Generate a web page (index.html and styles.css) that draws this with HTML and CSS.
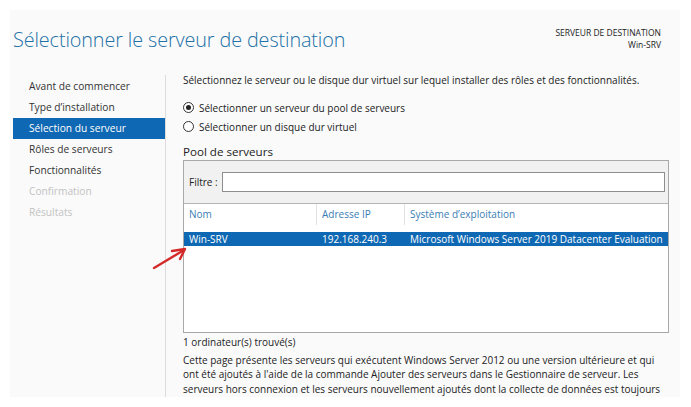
FILE: index.html
```html
<!DOCTYPE html>
<html lang="fr">
<head>
<meta charset="utf-8">
<link rel="stylesheet" href="styles.css">
</head>
<body>
<div class="window">
  <div class="header">
    <h1 class="title">Sélectionner le serveur de destination</h1>
    <div class="dest">
      <div>SERVEUR DE DESTINATION</div>
      <div>Win-SRV</div>
    </div>
  </div>
  <div class="main">
    <nav class="nav">
      <div class="nav-item">Avant de commencer</div>
      <div class="nav-item">Type d’installation</div>
      <div class="nav-item active">Sélection du serveur</div>
      <div class="nav-item">Rôles de serveurs</div>
      <div class="nav-item">Fonctionnalités</div>
      <div class="nav-item disabled">Confirmation</div>
      <div class="nav-item disabled">Résultats</div>
    </nav>
    <div class="content">
      <p class="intro">Sélectionnez le serveur ou le disque dur virtuel sur lequel installer des rôles et des fonctionnalités.</p>
      <div class="radios">
        <label class="radio"><span class="dot checked"></span>Sélectionner un serveur du pool de serveurs</label>
        <label class="radio"><span class="dot"></span>Sélectionner un disque dur virtuel</label>
      </div>
      <div class="pool-title">Pool de serveurs</div>
      <div class="box">
        <div class="filter">
          <span class="filter-label">Filtre :</span>
          <div class="filter-input"></div>
        </div>
        <div class="grid head">
          <div class="cell">Nom</div>
          <div class="cell sep">Adresse IP</div>
          <div class="cell sep">Système d’exploitation</div>
        </div>
        <div class="grid row selected">
          <div class="cell">Win-SRV</div>
          <div class="cell">192.168.240.3</div>
          <div class="cell">Microsoft Windows Server 2019 Datacenter Evaluation</div>
        </div>
      </div>
      <div class="count">1 ordinateur(s) trouvé(s)</div>
      <p class="desc">Cette page présente les serveurs qui exécutent Windows Server 2012 ou une version ultérieure et qui<br>ont été ajoutés à l'aide de la commande Ajouter des serveurs dans le Gestionnaire de serveur. Les<br>serveurs hors connexion et les serveurs nouvellement ajoutés dont la collecte de données est toujours</p>
    </div>
  </div>
</div>
<svg class="arrow" width="50" height="35" viewBox="0 0 50 35">
  <path d="M4 28 L34 10" stroke="#d42a2a" stroke-width="2.4" stroke-linecap="round" fill="none"/>
  <path d="M22 11 L35 9 L30 19" stroke="#d42a2a" stroke-width="2.4" stroke-linecap="round" stroke-linejoin="round" fill="none"/>
</svg>
</body>
</html>
```
FILE: styles.css
```css
html, body {
  margin: 0;
  padding: 0;
  background: #ffffff;
}
body {
  font-family: "Open Sans", "Noto Sans", sans-serif;
  color: #1e1e1e;
  position: relative;
  width: 691px;
  height: 407px;
  overflow: hidden;
}
.window {
  margin: 10px 0 0 10px;
  width: 670px;
  height: 387px;
  background: #fafafa;
  overflow: hidden;
  display: flex;
  flex-direction: column;
}
.header {
  display: flex;
  justify-content: space-between;
  align-items: flex-start;
  padding: 16px 19px 0 3px;
  height: 45px;
  flex-shrink: 0;
}
.title {
  margin: 0;
  font-weight: 300;
  font-size: 19.8px;
  color: #2170a6;
  letter-spacing: -0.1px;
  line-height: 28px;
}
.dest {
  text-align: right;
  font-size: 8.5px;
  line-height: 12px;
  color: #222;
  padding-top: 1px;
}
.main {
  display: flex;
  flex: 1;
  min-height: 0;
}
.nav {
  flex-shrink: 0;
  width: 152px;
  margin-top: 4px;
  padding: 1px 0 0 3px;
  border-right: 1px solid #dcdcdc;
  margin-right: 17px;
}
.nav-item {
  height: 21px;
  line-height: 21px;
  padding-left: 16px;
  font-size: 10.2px;
  color: #333;
}
.nav-item.active {
  background: #0f68b3;
  color: #ffffff;
}
.nav-item.disabled {
  color: #c2c2c2;
}
.content {
  flex: 1;
  min-width: 0;
  padding-top: 2px;
  font-size: 10px;
  color: #222;
}
.intro {
  margin: 0;
  line-height: 14px;
}
.radios {
  margin-top: 11px;
  display: flex;
  flex-direction: column;
}
.radio {
  display: flex;
  align-items: center;
  height: 19px;
  gap: 5px;
}
.dot {
  width: 9px;
  height: 9px;
  border: 1px solid #333;
  border-radius: 50%;
  background: #fff;
  display: inline-flex;
  align-items: center;
  justify-content: center;
}
.dot.checked::after {
  content: "";
  width: 5px;
  height: 5px;
  border-radius: 50%;
  background: #222;
}
.pool-title {
  font-size: 11.6px;
  margin-top: 8px;
  line-height: 16px;
  color: #222;
}
.box {
  width: 484px;
  height: 171px;
  border: 1px solid #a8a8a8;
  background: #fff;
}
.filter {
  background: #f1f1f1;
  border-bottom: 1px solid #b4b4b4;
  display: flex;
  align-items: center;
  padding: 0 3px 0 5px;
  gap: 4px;
  box-sizing: border-box;
  height: 43px;
}
.filter-label {
  font-size: 10px;
}
.filter-input {
  flex: 1;
  height: 18px;
  background: #fff;
  border: 1px solid #8e8e8e;
}
.grid {
  display: grid;
  grid-template-columns: 132px 88px 1fr;
}
.head {
  height: 21px;
  margin-bottom: 7px;
}
.head .cell {
  color: #3a7db3;
  line-height: 21px;
  padding-left: 5px;
}
.head .cell.sep {
  border-left: 1px solid #e2e2e2;
  padding-left: 5px;
}
.row {
  height: 14px;
}
.row .cell {
  line-height: 14px;
  padding-left: 5px;
  white-space: nowrap;
}
.row .cell + .cell {
  padding-left: 6px;
}
.selected {
  background: #0f68b3;
  color: #fff;
}
.count {
  margin-top: 2px;
  line-height: 15px;
}
.desc {
  margin: 3px 0 0 0;
  line-height: 14.3px;
  white-space: nowrap;
}
.arrow {
  position: absolute;
  left: 150px;
  top: 240px;
}
```
